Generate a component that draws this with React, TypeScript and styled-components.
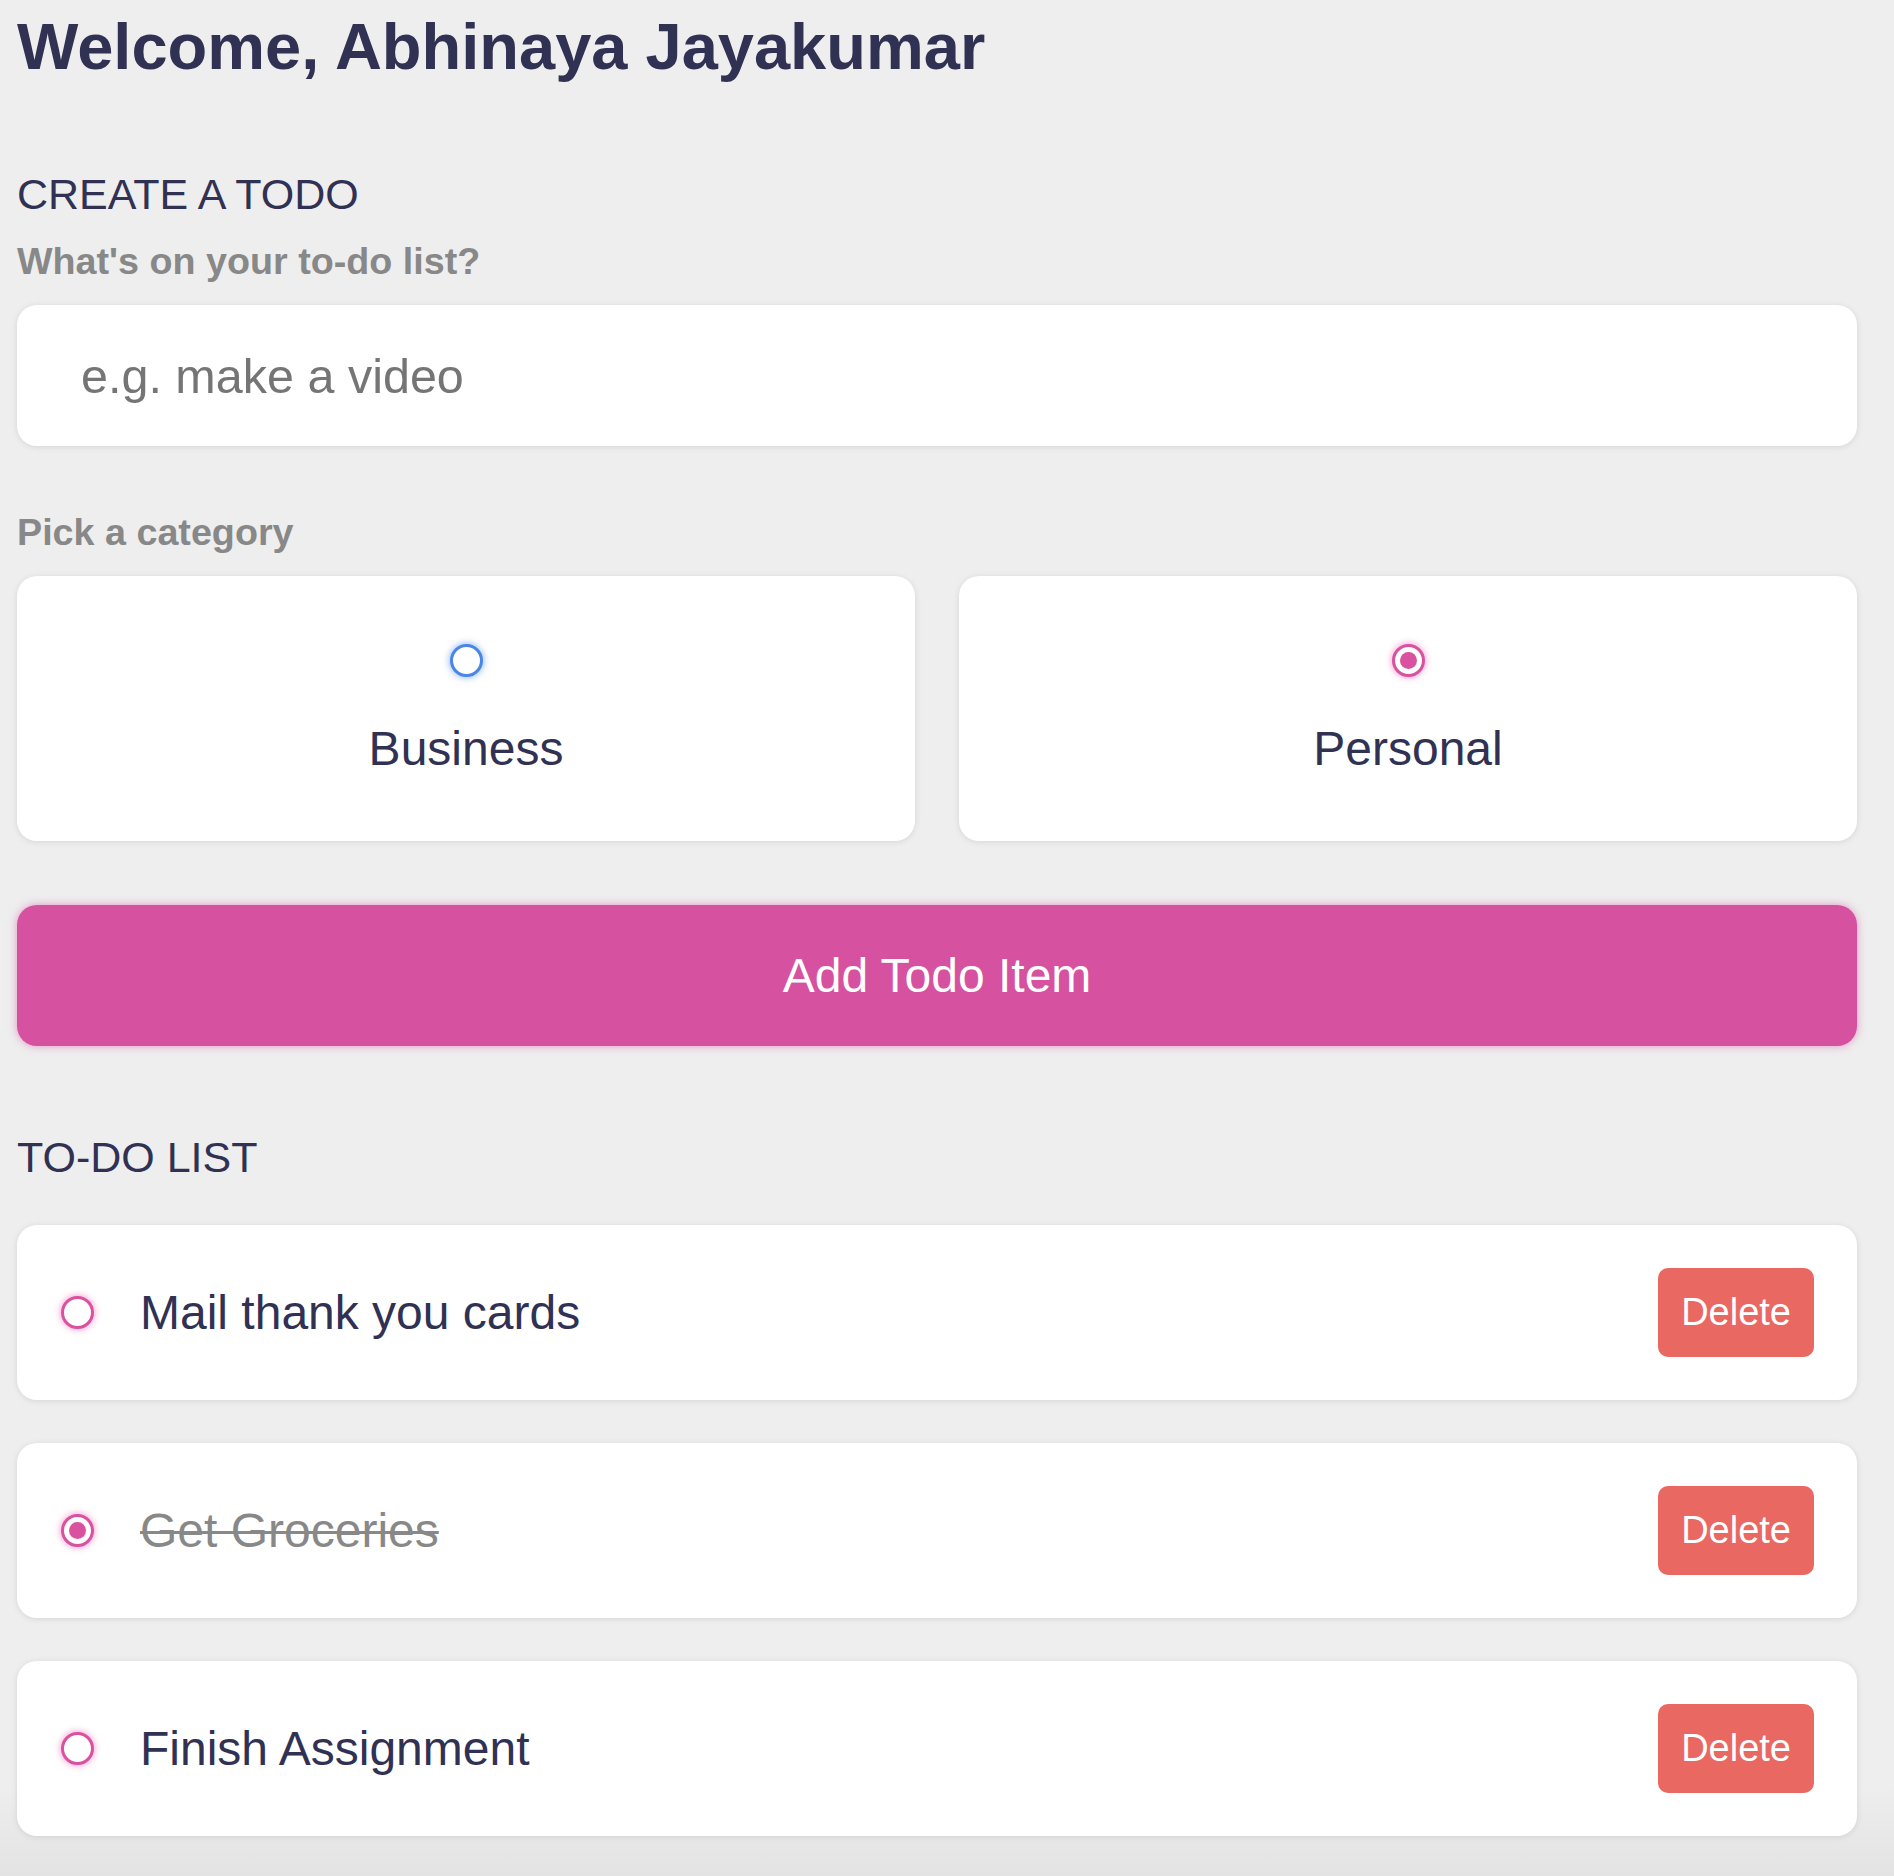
import React from "react";
import styled, { createGlobalStyle } from "styled-components";

const GlobalStyle = createGlobalStyle`
  * { box-sizing: border-box; margin: 0; }
  html, body {
    min-height: 100vh;
  }
  body {
    margin: 0;
    background: linear-gradient(to bottom, #eeeeee calc(100% - 90px), #e3e3e3 100%);
    color: #313154;
    font-family: "Liberation Sans", Arial, Helvetica, sans-serif;
  }
`;

const Page = styled.main`
  padding: 10px 37px 40px 17px;
  min-height: 100vh;
`;

const Title = styled.h1`
  font-size: 65px;
  line-height: 74px;
  font-weight: 700;
  color: #313154;
`;

const Section = styled.section<{ $gap: number }>`
  display: flex;
  flex-direction: column;
  margin-top: ${(p) => p.$gap}px;
`;

const SectionTitle = styled.h3`
  font-size: 43px;
  line-height: 48px;
  font-weight: 400;
  color: #313154;
`;

const FieldLabel = styled.h4<{ $gap: number }>`
  font-size: 37.7px;
  line-height: 44px;
  font-weight: 700;
  color: #888888;
  margin-top: ${(p) => p.$gap}px;
`;

const TextInput = styled.input`
  display: block;
  width: 100%;
  height: 141px;
  margin-top: 22px;
  padding: 0 64px;
  border: none;
  outline: none;
  border-radius: 20px;
  background: #ffffff;
  box-shadow: 0 1px 6px rgba(0, 0, 0, 0.1);
  font-family: "Liberation Sans", Arial, Helvetica, sans-serif;
  font-size: 48.5px;
  color: #313154;
  &::placeholder {
    color: #757575;
  }
`;

const Options = styled.div`
  display: grid;
  grid-template-columns: repeat(2, 1fr);
  gap: 44px;
  margin-top: 22px;
`;

const OptionCard = styled.label`
  display: flex;
  flex-direction: column;
  align-items: center;
  gap: 44px;
  padding: 68px 24px 65px;
  background: #ffffff;
  border-radius: 20px;
  box-shadow: 0 1px 6px rgba(0, 0, 0, 0.1);
  cursor: pointer;
`;

const OptionText = styled.div`
  font-size: 48px;
  line-height: 55px;
  color: #313154;
`;

const Bubble = styled.span<{ $color: string; $glow: string; $checked: boolean }>`
  display: flex;
  align-items: center;
  justify-content: center;
  flex: none;
  width: 33px;
  height: 33px;
  border-radius: 50%;
  border: 3px solid ${(p) => p.$color};
  box-shadow: 0 0 6px 1px ${(p) => p.$glow};
  background: #ffffff;
  &::after {
    content: "";
    display: ${(p) => (p.$checked ? "block" : "none")};
    width: 17px;
    height: 17px;
    border-radius: 50%;
    background: ${(p) => p.$color};
  }
`;

const AddButton = styled.button`
  display: block;
  width: 100%;
  height: 141px;
  margin-top: 64px;
  border: none;
  border-radius: 20px;
  background: #d6519f;
  box-shadow: 0 0 8px rgba(214, 81, 159, 0.55);
  color: #ffffff;
  font-family: "Liberation Sans", Arial, Helvetica, sans-serif;
  font-size: 48px;
  font-weight: 400;
  cursor: pointer;
`;

const List = styled.div`
  display: flex;
  flex-direction: column;
  gap: 43px;
  margin-top: 44px;
`;

const TodoCard = styled.div`
  display: flex;
  align-items: center;
  height: 175px;
  padding: 0 43px 0 44px;
  background: #ffffff;
  border-radius: 20px;
  box-shadow: 0 1px 6px rgba(0, 0, 0, 0.1);
`;

const TodoText = styled.div<{ $done: boolean }>`
  flex: 1;
  margin-left: 46px;
  font-size: 48px;
  line-height: 55px;
  color: ${(p) => (p.$done ? "#888888" : "#313154")};
  text-decoration: ${(p) => (p.$done ? "line-through" : "none")};
  text-decoration-thickness: 3px;
`;

const DeleteButton = styled.button`
  height: 89px;
  padding: 0 23px;
  border: none;
  border-radius: 10px;
  background: #e96861;
  color: #ffffff;
  font-family: "Liberation Sans", Arial, Helvetica, sans-serif;
  font-size: 38px;
  line-height: 89px;
  cursor: pointer;
`;

const BLUE = "#4a86e8";
const BLUE_GLOW = "rgba(58, 130, 238, 0.5)";
const PINK = "#d9519f";
const PINK_GLOW = "rgba(234, 64, 164, 0.45)";

const todos = [
  { text: "Mail thank you cards", done: false },
  { text: "Get Groceries", done: true },
  { text: "Finish Assignment", done: false },
];

export default function App() {
  return (
    <>
      <GlobalStyle />
      <Page>
        <Title>Welcome, Abhinaya Jayakumar</Title>

        <Section $gap={86}>
          <SectionTitle>CREATE A TODO</SectionTitle>
          <FieldLabel $gap={21}>What's on your to-do list?</FieldLabel>
          <TextInput type="text" placeholder="e.g. make a video" />
          <FieldLabel $gap={64}>Pick a category</FieldLabel>
          <Options>
            <OptionCard>
              <Bubble $color={BLUE} $glow={BLUE_GLOW} $checked={false} />
              <OptionText>Business</OptionText>
            </OptionCard>
            <OptionCard>
              <Bubble $color={PINK} $glow={PINK_GLOW} $checked={true} />
              <OptionText>Personal</OptionText>
            </OptionCard>
          </Options>
          <AddButton type="button">Add Todo Item</AddButton>
        </Section>

        <Section $gap={87}>
          <SectionTitle>TO-DO LIST</SectionTitle>
          <List>
            {todos.map((t) => (
              <TodoCard key={t.text}>
                <Bubble $color={PINK} $glow={PINK_GLOW} $checked={t.done} />
                <TodoText $done={t.done}>{t.text}</TodoText>
                <DeleteButton type="button">Delete</DeleteButton>
              </TodoCard>
            ))}
          </List>
        </Section>
      </Page>
    </>
  );
}
